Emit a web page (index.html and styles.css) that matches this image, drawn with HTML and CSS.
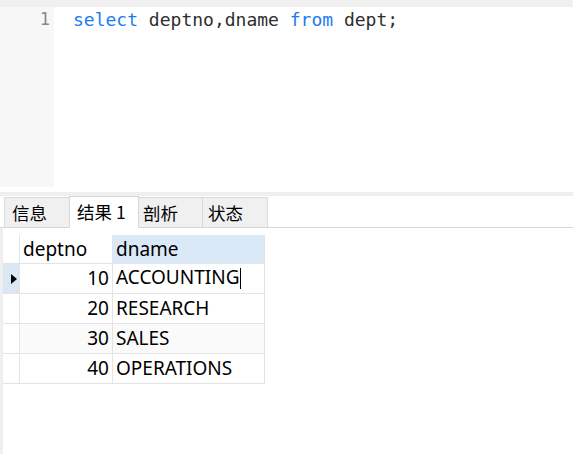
FILE: index.html
```html
<!DOCTYPE html>
<html>
<head>
<meta charset="utf-8">
<link rel="stylesheet" href="styles.css">
</head>
<body>
<div class="app">
  <div class="editor">
    <div class="editor-body">
      <div class="gutter"><div class="ln">1</div></div>
      <div class="code"><span class="kw">select</span> deptno,dname <span class="kw">from</span> dept;</div>
    </div>
    <div class="hscroll"></div>
  </div>
  <div class="splitter"></div>
  <div class="tabbar">
    <div class="tab t1">信息</div>
    <div class="tab t2 active">结果 1</div>
    <div class="tab t3">剖析</div>
    <div class="tab t4">状态</div>
  </div>
  <div class="results">
    <table class="grid">
      <thead>
        <tr>
          <th class="ind"></th>
          <th class="c1">deptno</th>
          <th class="c2 sel">dname</th>
        </tr>
      </thead>
      <tbody>
        <tr>
          <td class="ind cur"><svg class="arrow" width="6" height="10" viewBox="0 0 6 10"><path d="M0 0 L6 5 L0 10 Z" fill="#000"/></svg></td>
          <td class="num">10</td>
          <td class="txt">ACCOUNTING<span class="caret"></span></td>
        </tr>
        <tr>
          <td class="ind"></td>
          <td class="num">20</td>
          <td class="txt">RESEARCH</td>
        </tr>
        <tr class="alt">
          <td class="ind"></td>
          <td class="num">30</td>
          <td class="txt">SALES</td>
        </tr>
        <tr>
          <td class="ind"></td>
          <td class="num">40</td>
          <td class="txt">OPERATIONS</td>
        </tr>
      </tbody>
    </table>
  </div>
</div>
</body>
</html>
```

FILE: styles.css
```css
html, body {
  margin: 0;
  padding: 0;
  background: #ffffff;
}
.app {
  width: 573px;
  height: 454px;
  overflow: hidden;
  display: flex;
  flex-direction: column;
  font-family: "Noto Sans", "Noto Sans CJK SC", sans-serif;
}
.editor {
  border-top: 7px solid #f0f0f0;
  background: #ffffff;
}
.editor-body {
  display: flex;
  height: 180px;
}
.gutter {
  width: 54px;
  background: #f7f7f7;
  box-sizing: border-box;
  padding-right: 4px;
  padding-top: 2px;
  text-align: right;
}
.ln {
  font-family: "DejaVu Sans Mono", monospace;
  font-size: 17px;
  line-height: 21px;
  color: #8a8a8a;
}
.code {
  padding-left: 19px;
  padding-top: 2px;
  font-family: "DejaVu Sans Mono", monospace;
  font-size: 18px;
  line-height: 21px;
  color: #2e2e2e;
  white-space: pre;
}
.kw {
  color: #1a7cf0;
}
.hscroll {
  height: 5px;
}
.splitter {
  height: 4px;
  background: #efefef;
}
.tabbar {
  display: flex;
  align-items: flex-start;
  height: 31px;
  padding-left: 4px;
  border-bottom: 1px solid #d6d6d6;
  font-family: "Noto Sans CJK SC", sans-serif;
  font-size: 17.5px;
  color: #000;
}
.tab {
  box-sizing: border-box;
  height: 30px;
  margin-top: 1px;
  margin-left: -1px;
  padding-left: 6px;
  background: #f0f0f0;
  border: 1px solid #d9d9d9;
  border-bottom: none;
  display: flex;
  align-items: center;
  line-height: 1;
}
.t1 { width: 66px; margin-left: 0; padding-left: 7px; }
.t2 { width: 70px; padding-left: 7px; }
.t3 { width: 65px; padding-left: 4px; }
.t4 { width: 66px; padding-left: 5px; }
.tab.active {
  background: #ffffff;
  height: 32px;
  margin-top: 0;
  margin-bottom: -1px;
  position: relative;
  padding-bottom: 1px;
}
.results {
  flex: 1;
  border-left: 3px solid #efefef;
  padding-top: 7px;
}
.grid {
  border-collapse: separate;
  border-spacing: 0;
  font-family: "Noto Sans", sans-serif;
  font-size: 19px;
  color: #000;
}
.grid th, .grid td {
  padding: 0;
  border-right: 1px solid #e4e4e4;
  border-bottom: 1px solid #e4e4e4;
  vertical-align: middle;
  line-height: 22px;
  white-space: nowrap;
  font-weight: normal;
}
.grid th {
  height: 28px;
  text-align: left;
}
.grid td {
  height: 27px;
  padding-bottom: 2px;
}
.grid .ind {
  width: 16px;
  text-align: center;
}
.grid td.ind {
  padding-bottom: 0;
  height: 29px;
}
.grid .c1 {
  width: 89px;
  padding-left: 3px;
}
.grid .c2 {
  width: 148px;
  padding-left: 3px;
}
.grid th.sel {
  background: #d9e9f7;
}
.grid td.cur {
  background: #dae8f5;
}
.arrow {
  display: block;
  margin-left: 8px;
}
.grid td.num {
  text-align: right;
  padding-right: 3px;
}
.grid td.txt {
  padding-left: 3px;
}
.grid tr.alt td.num, .grid tr.alt td.txt {
  background: #fafafa;
}
.caret {
  display: inline-block;
  width: 1px;
  height: 21px;
  background: #000;
  vertical-align: middle;
  margin-left: 1px;
}
```
